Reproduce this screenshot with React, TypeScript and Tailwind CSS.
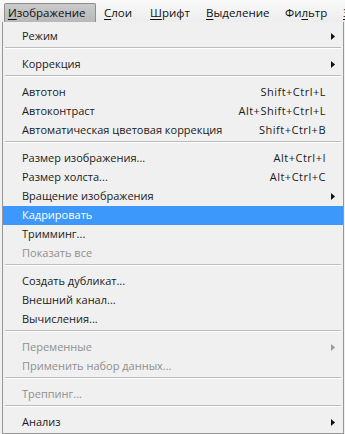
import type { ReactNode } from 'react'

type Item =
  | { kind: 'sep' }
  | { kind: 'item'; label: string; shortcut?: string; sub?: boolean; disabled?: boolean; active?: boolean }

const items: Item[] = [
  { kind: 'item', label: 'Режим', sub: true },
  { kind: 'sep' },
  { kind: 'item', label: 'Коррекция', sub: true },
  { kind: 'sep' },
  { kind: 'item', label: 'Автотон', shortcut: 'Shift+Ctrl+L' },
  { kind: 'item', label: 'Автоконтраст', shortcut: 'Alt+Shift+Ctrl+L' },
  { kind: 'item', label: 'Автоматическая цветовая коррекция', shortcut: 'Shift+Ctrl+B' },
  { kind: 'sep' },
  { kind: 'item', label: 'Размер изображения...', shortcut: 'Alt+Ctrl+I' },
  { kind: 'item', label: 'Размер холста...', shortcut: 'Alt+Ctrl+C' },
  { kind: 'item', label: 'Вращение изображения', sub: true },
  { kind: 'item', label: 'Кадрировать', active: true },
  { kind: 'item', label: 'Тримминг...' },
  { kind: 'item', label: 'Показать все', disabled: true },
  { kind: 'sep' },
  { kind: 'item', label: 'Создать дубликат...' },
  { kind: 'item', label: 'Внешний канал...' },
  { kind: 'item', label: 'Вычисления...' },
  { kind: 'sep' },
  { kind: 'item', label: 'Переменные', sub: true, disabled: true },
  { kind: 'item', label: 'Применить набор данных...', disabled: true },
  { kind: 'sep' },
  { kind: 'item', label: 'Треппинг...', disabled: true },
  { kind: 'sep' },
  { kind: 'item', label: 'Анализ', sub: true },
]

function Arrow({ color }: { color: string }) {
  return (
    <svg width="4" height="7" viewBox="0 0 4 7">
      <path d="M0 0 L4 3.5 L0 7 Z" fill={color} />
    </svg>
  )
}

function U({ children }: { children: ReactNode }) {
  return <span className="underline decoration-1 underline-offset-[2px]">{children}</span>
}

export default function App() {
  return (
    <div className="h-[434px] w-[345px] overflow-hidden bg-[#f0f0f0] font-['Open_Sans','Noto_Sans',sans-serif] text-[11px] text-[#1b1b1b]">
      {/* menu bar */}
      <div className="flex h-[22px] items-end whitespace-nowrap bg-gradient-to-b from-[#f9f9f9] to-[#ededed] pl-[4px] text-[11.5px] leading-[15px] text-[#111]">
        <div className="h-[19px] w-[92px] shrink-0 rounded-t-[2px] border border-b-0 border-[#8e8e8e] bg-gradient-to-b from-[#cacaca] to-[#b8b8b8] pl-[3px] pt-[1px]">
          <U>И</U>зображение
        </div>
        <div className="h-[19px] w-[54px] shrink-0 pl-[8px] pt-[2px]">
          <U>С</U>лои
        </div>
        <div className="h-[19px] w-[56px] shrink-0 pt-[2px]">
          <U>Ш</U>рифт
        </div>
        <div className="h-[19px] w-[79px] shrink-0 pt-[2px]">
          <U>В</U>ыделение
        </div>
        <div className="h-[19px] w-[58px] shrink-0 pt-[2px]">
          Фи<U>л</U>ьтр
        </div>
        <div className="h-[19px] shrink-0 pt-[2px]">
          <U>З</U>
        </div>
      </div>

      {/* dropdown */}
      <div className="ml-[2px] flex h-[412px] w-[342px] flex-col border-x border-b border-[#979797] bg-[#f0f0f0] pt-[5px]">
        {items.map((it, i) =>
          it.kind === 'sep' ? (
            <div key={i} className="h-[9px] shrink-0 px-[2px] pt-[1px]">
              <div className="h-px bg-[#bcbcbc]" />
              <div className="h-px bg-white" />
            </div>
          ) : (
            <div
              key={i}
              className={`flex h-[19px] shrink-0 items-center pl-[19px] ${
                it.active ? 'bg-[#3d98fb] text-white' : it.disabled ? 'text-[#8f8f8f]' : ''
              }`}
            >
              <span className="flex-1">{it.label}</span>
              {it.shortcut && <span className="tracking-[0.5px]">{it.shortcut}</span>}
              <span className="flex w-[17px] justify-end pr-[8px]">
                {it.sub && <Arrow color={it.disabled ? '#9a9a9a' : '#111'} />}
              </span>
            </div>
          ),
        )}
      </div>
    </div>
  )
}
